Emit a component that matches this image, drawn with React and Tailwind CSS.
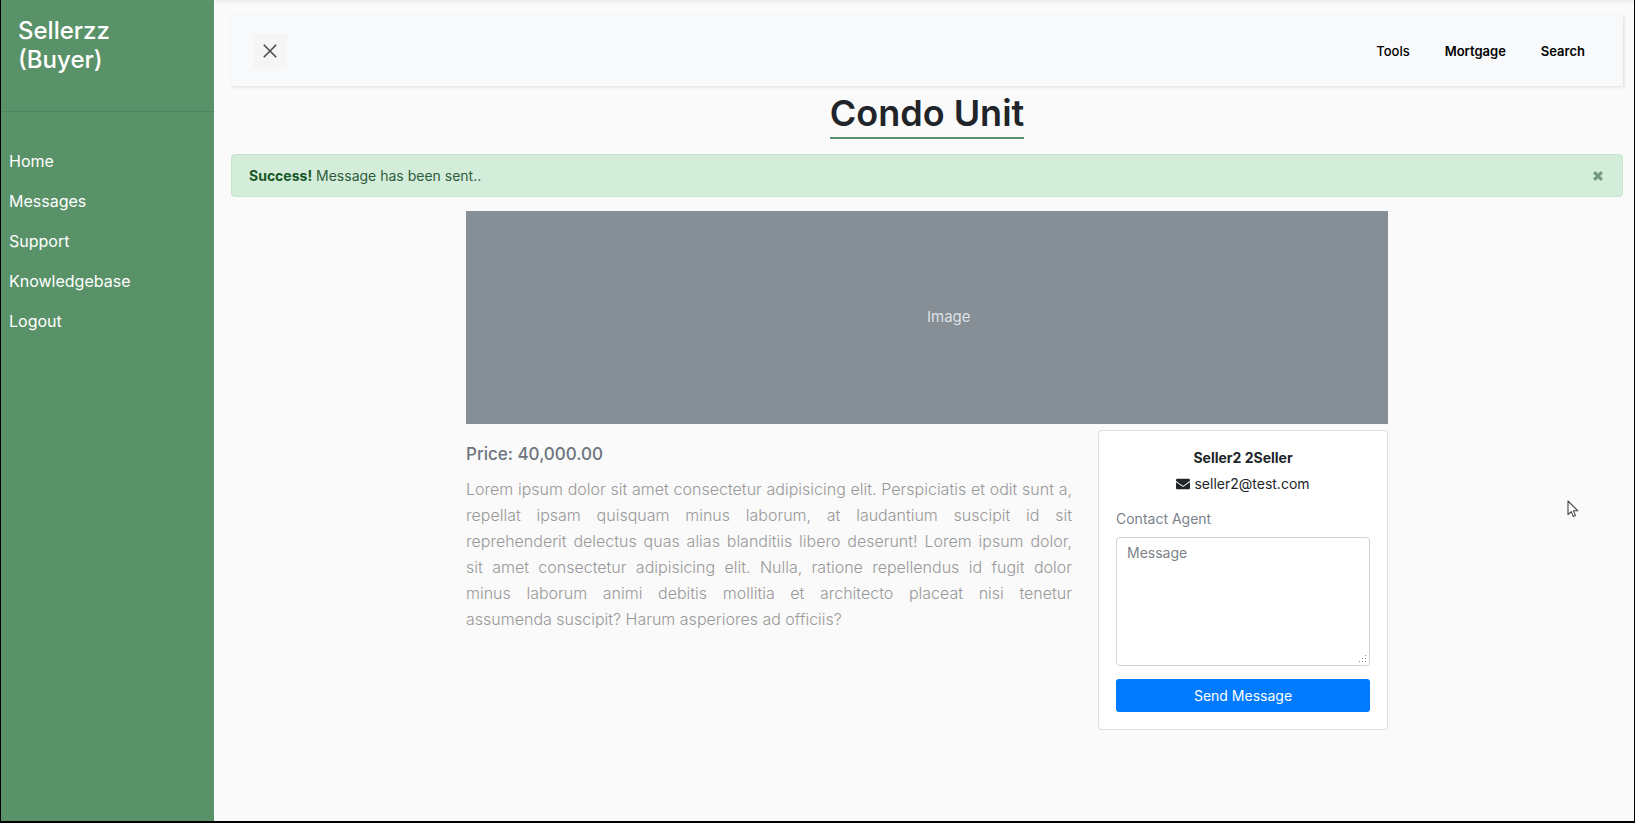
import { FaEnvelope } from "react-icons/fa";

const sideLinks = ["Home", "Messages", "Support", "Knowledgebase", "Logout"];

function Sidebar() {
  return (
    <aside className="w-[213px] shrink-0 bg-[#599268] text-white">
      <div className="border-b border-[#4c8560] pt-4 pr-4 pb-[37px] pl-[17px]">
        <h3 className="text-2xl leading-[29px] font-medium">
          Sellerzz
          <br />
          (Buyer)
        </h3>
      </div>
      <nav className="pt-[29px]">
        <ul>
          {sideLinks.map((label) => (
            <li key={label}>
              <a href="#" className="block px-2 text-base leading-10">
                {label}
              </a>
            </li>
          ))}
        </ul>
      </nav>
    </aside>
  );
}

function TopBar() {
  return (
    <header className="flex h-[71px] items-center justify-between bg-[#f8f9fa] pr-[38px] pl-[22px] shadow-[1px_1px_3px_rgba(0,0,0,0.12)]">
      <button
        type="button"
        aria-label="Toggle menu"
        className="flex size-[34px] items-center justify-center bg-[#f5f5f5]"
      >
        <svg viewBox="0 0 14 14" className="size-3.5" fill="none" stroke="#4a4a4a" strokeWidth="1.6">
          <path d="M.8.8 13.2 13.2M13.2.8.8 13.2" />
        </svg>
      </button>
      <nav className="flex gap-[35px] text-[13px] leading-5 text-black">
        <a href="#" className="font-medium">Tools</a>
        <a href="#" className="font-semibold">Mortgage</a>
        <a href="#" className="font-semibold">Search</a>
      </nav>
    </header>
  );
}

function ResizeGrip() {
  return (
    <svg
      viewBox="0 0 8 8"
      aria-hidden="true"
      className="pointer-events-none absolute right-[3px] bottom-[3px] size-2"
      fill="#8a8a8a"
    >
      <path d="M6 0h1v1H6zM3 3h1v1H3zM6 3h1v1H6zM0 6h1v1H0zM3 6h1v1H3zM6 6h1v1H6z" />
    </svg>
  );
}

function ContactCard() {
  return (
    <section className="w-[290px] shrink-0 rounded border border-[#dfdfdf] bg-white px-[17px] pt-3.5 pb-[17px]">
      <div className="text-center text-sm leading-[26px] text-[#212529]">
        <p className="font-bold">Seller2 2Seller</p>
        <p className="flex items-center justify-center gap-1">
          <FaEnvelope className="size-3.5" />
          <span>seller2@test.com</span>
        </p>
      </div>
      <form className="mt-2.5 flex flex-col" onSubmit={(e) => e.preventDefault()}>
        <label htmlFor="message" className="mb-1.5 text-sm leading-6 text-[#7b8289]">
          Contact Agent
        </label>
        <div className="relative flex">
          <textarea
            id="message"
            placeholder="Message"
            className="h-[129px] w-full rounded border border-[#ced4da] bg-white px-2.5 py-1 text-sm leading-[22px] placeholder:text-[#7b8289] [&::-webkit-resizer]:hidden"
          />
          <ResizeGrip />
        </div>
        <button
          type="submit"
          className="mt-[13px] h-[33px] rounded-[3px] bg-[#007bff] text-sm text-white"
        >
          Send Message
        </button>
      </form>
    </section>
  );
}

export default function App() {
  return (
    <div className="flex min-h-screen border-r border-b-2 border-l border-black bg-[#fafafa] font-[Inter,sans-serif]">
      <Sidebar />
      <main className="relative min-w-0 flex-1 border-l border-white pt-[15px] pr-[11px] pl-4">
        <div className="absolute inset-x-0 top-0 h-1 bg-linear-to-b from-[#ececec] to-[#fafafa]" />
        <TopBar />
        <div className="mt-[5px] text-center">
          <h1 className="inline-block border-b-2 border-[#599268] pb-0.5 text-4xl leading-11 font-semibold text-[#212529]">
            Condo Unit
          </h1>
        </div>
        <div
          role="alert"
          className="mt-[15px] flex h-[43px] items-center justify-between rounded border border-[#c3e6cb] bg-[#d4edda] px-[17px] text-sm text-[#2f5c3b]"
        >
          <p>
            <strong className="font-bold text-[#155724]">Success!</strong> Message has been sent..
          </p>
          <button type="button" aria-label="Close" className="flex size-3.5 items-center justify-center">
            <svg viewBox="0 0 10 10" className="size-2.5" fill="none" stroke="#739a80" strokeWidth="3.2">
              <path d="M1.2 1.2 8.8 8.8M8.8 1.2 1.2 8.8" />
            </svg>
          </button>
        </div>
        <div className="mx-auto mt-3.5 max-w-[922px]">
          <div className="flex h-[213px] items-center bg-[#868e96] pl-[50%] text-[15px] text-[#dee2e6]">
            Image
          </div>
          <div className="mt-1.5 flex items-start gap-[26px]">
            <section className="min-w-0 flex-1 pt-3">
              <h2 className="text-[17px] leading-6 font-medium text-[#6c757d]">Price: 40,000.00</h2>
              <p className="mt-2.5 text-justify text-base leading-[26px] font-light text-[#999]">
                Lorem ipsum dolor sit amet consectetur adipisicing elit. Perspiciatis et odit sunt a,
                repellat ipsam quisquam minus laborum, at laudantium suscipit id sit reprehenderit
                delectus quas alias blanditiis libero deserunt! Lorem ipsum dolor, <wbr />
                <span className="whitespace-nowrap">sit amet</span> consectetur adipisicing elit.
                Nulla, ratione repellendus id fugit dolor{" "}
                <span className="whitespace-nowrap">minus laborum</span> animi debitis mollitia et
                architecto placeat nisi tenetur{" "}
                <span className="whitespace-nowrap">assumenda suscipit?</span> Harum asperiores ad
                officiis?
              </p>
            </section>
            <ContactCard />
          </div>
        </div>
        <svg
          viewBox="0 0 12 18"
          aria-hidden="true"
          className="pointer-events-none absolute top-[500px] right-[55px] h-[18px] w-3"
          fill="#fff"
          stroke="#444"
          strokeWidth="1.1"
          strokeLinejoin="round"
        >
          <path d="M1 1V14.6L4.2 11.6L6.2 16.4L8.4 15.4L6.4 10.8H10.8Z" />
        </svg>
      </main>
    </div>
  );
}
